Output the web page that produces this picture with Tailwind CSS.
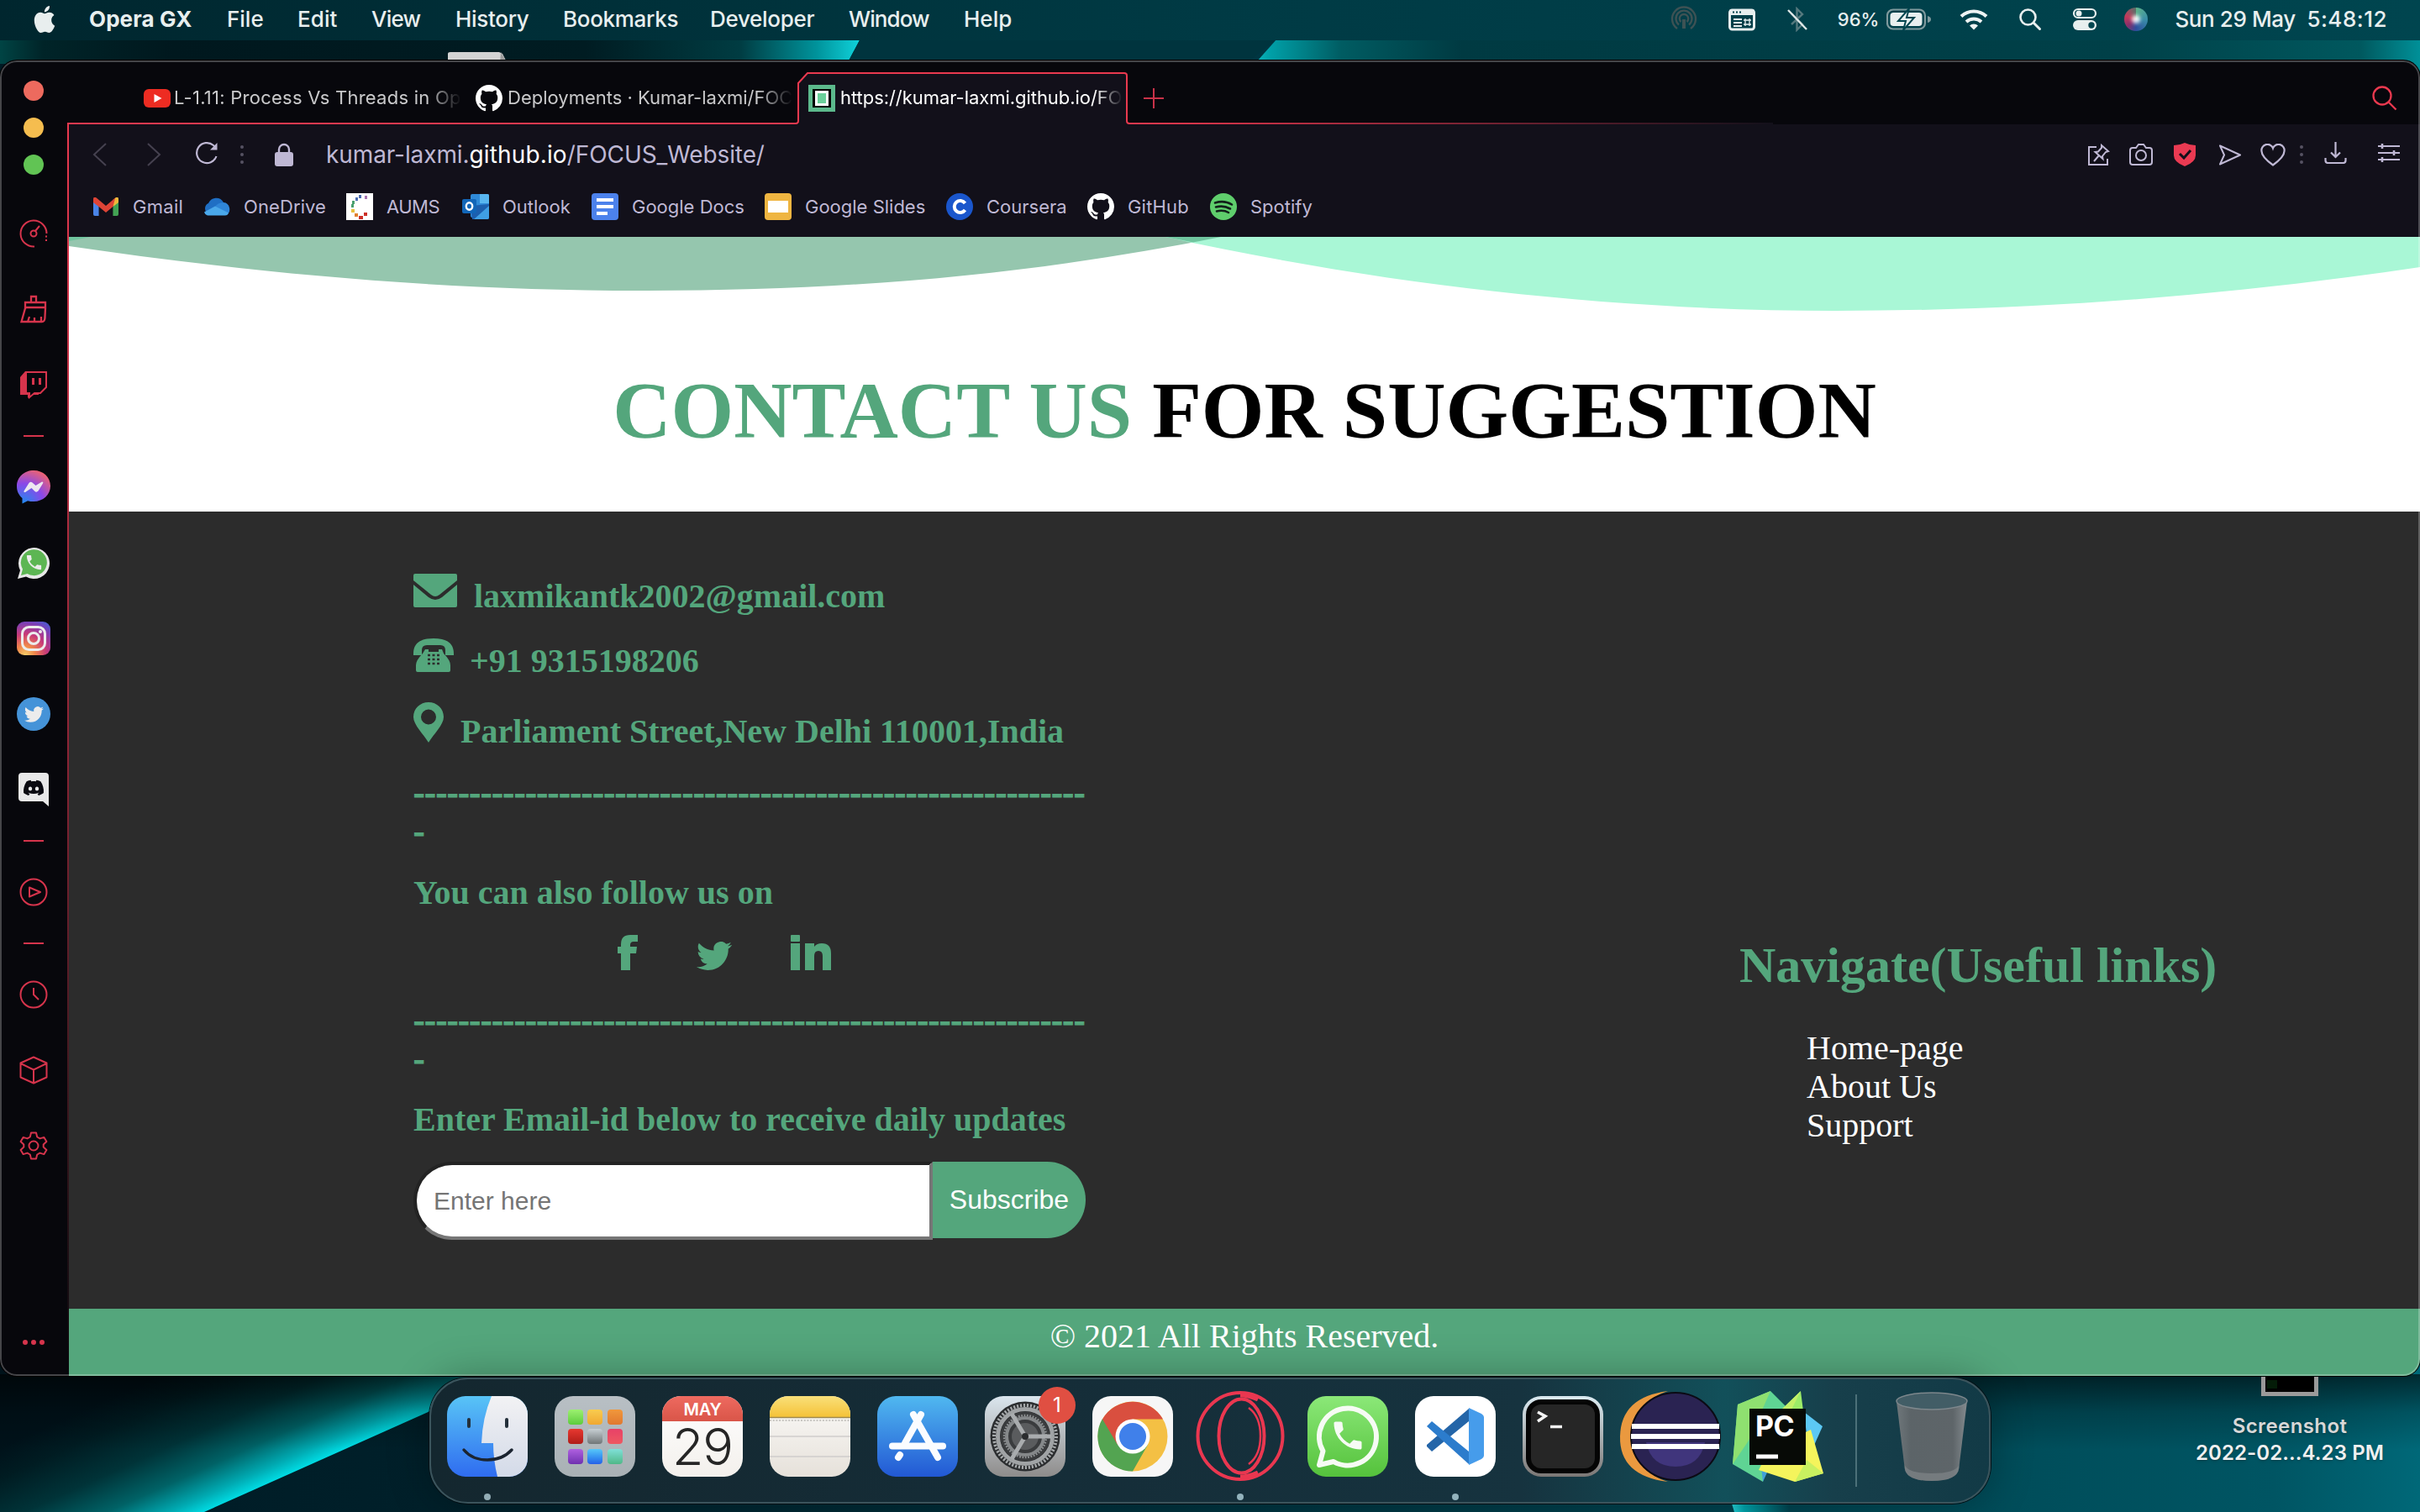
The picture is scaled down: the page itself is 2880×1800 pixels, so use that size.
<!DOCTYPE html>
<html lang="en">
<head>
<meta charset="utf-8">
<title>Desktop</title>
<script src="https://cdn.jsdelivr.net/npm/@tailwindcss/browser@4"></script>
</head>
<body class="relative w-[2880px] h-[1800px] overflow-hidden bg-[#00323c] font-['Inter',sans-serif]">

<!-- shared glyphs -->
<svg class="absolute w-0 h-0" aria-hidden="true">
  <defs>
    <symbol id="github" viewBox="0 0 16 16"><path d="M8 0C3.58 0 0 3.58 0 8c0 3.54 2.29 6.53 5.47 7.59.4.07.55-.17.55-.38 0-.19-.01-.82-.01-1.49-2.01.37-2.53-.49-2.69-.94-.09-.23-.48-.94-.82-1.13-.28-.15-.68-.52-.01-.53.63-.01 1.08.58 1.23.82.72 1.21 1.87.87 2.33.66.07-.52.28-.87.51-1.07-1.78-.2-3.64-.89-3.64-3.95 0-.87.31-1.59.82-2.15-.08-.2-.36-1.02.08-2.12 0 0 .67-.21 2.2.82.64-.18 1.32-.27 2-.27s1.36.09 2 .27c1.53-1.04 2.2-.82 2.2-.82.44 1.1.16 1.92.08 2.12.51.56.82 1.27.82 2.15 0 3.07-1.87 3.75-3.65 3.95.29.25.54.73.54 1.48 0 1.07-.01 1.93-.01 2.2 0 .21.15.46.55.38A8.01 8.01 0 0 0 16 8c0-4.42-3.58-8-8-8z"/></symbol>
    <symbol id="bird" viewBox="0 0 24 24"><path d="M23.953 4.57a10 10 0 01-2.825.775 4.958 4.958 0 002.163-2.723c-.951.555-2.005.959-3.127 1.184a4.92 4.92 0 00-8.384 4.482C7.69 8.095 4.067 6.13 1.64 3.162a4.822 4.822 0 00-.666 2.475c0 1.71.87 3.213 2.188 4.096a4.904 4.904 0 01-2.228-.616v.06a4.923 4.923 0 003.946 4.827 4.996 4.996 0 01-2.212.085 4.936 4.936 0 004.604 3.417 9.867 9.867 0 01-6.102 2.105c-.39 0-.779-.023-1.17-.067a13.995 13.995 0 007.557 2.209c9.053 0 13.998-7.496 13.998-13.985 0-.21 0-.42-.015-.63A9.935 9.935 0 0024 4.59z"/></symbol>
    <symbol id="handset" viewBox="0 0 24 24"><path d="M6.62 10.79c1.44 2.83 3.76 5.14 6.59 6.59l2.2-2.2c.27-.27.67-.36 1.02-.24 1.12.37 2.33.57 3.57.57.55 0 1 .45 1 1V20c0 .55-.45 1-1 1-9.39 0-17-7.61-17-17 0-.55.45-1 1-1h3.5c.55 0 1 .45 1 1 0 1.25.2 2.45.57 3.57.11.35.03.74-.25 1.02l-2.2 2.2z"/></symbol>
    <linearGradient id="beam" gradientUnits="userSpaceOnUse" x1="376" y1="1740" x2="306" y2="1585">
      <stop offset="0" stop-color="#00dbe3"/><stop offset=".1" stop-color="#00aab2"/><stop offset=".28" stop-color="#006266"/><stop offset=".52" stop-color="#003338"/><stop offset=".8" stop-color="#001c22"/><stop offset="1" stop-color="#00121a"/>
    </linearGradient>
    <linearGradient id="base"><stop offset="0" stop-color="#001a24"/><stop offset=".18" stop-color="#00202a"/><stop offset=".5" stop-color="#003440"/><stop offset=".83" stop-color="#004d5a"/><stop offset=".94" stop-color="#005563"/><stop offset="1" stop-color="#006878"/></linearGradient>
    <linearGradient id="topA"><stop offset="0" stop-color="#004444"/><stop offset=".05" stop-color="#002428"/><stop offset=".2" stop-color="#00181e"/><stop offset=".68" stop-color="#001c22"/><stop offset=".86" stop-color="#003c42"/><stop offset=".95" stop-color="#00949c"/><stop offset="1" stop-color="#10d4dc"/></linearGradient>
    <linearGradient id="topB"><stop offset="0" stop-color="#2ce0ea"/><stop offset=".04" stop-color="#00a0a8"/><stop offset=".1" stop-color="#005c62"/><stop offset=".2" stop-color="#003a42"/><stop offset=".75" stop-color="#004048"/><stop offset=".95" stop-color="#00585e"/><stop offset="1" stop-color="#009098"/></linearGradient>
    <linearGradient id="beam2"><stop offset="0" stop-color="#30e4ea"/><stop offset=".25" stop-color="#00a8b0"/><stop offset="1" stop-color="#004450"/></linearGradient>
    <linearGradient id="shade" x2="0" y2="1"><stop offset="0" stop-color="#000" stop-opacity=".6"/><stop offset=".5" stop-color="#000" stop-opacity=".2"/><stop offset="1" stop-color="#000" stop-opacity="0"/></linearGradient>
  </defs>
</svg>

<!-- wallpaper -->
<svg class="absolute inset-0" width="2880" height="1800" viewBox="0 0 2880 1800">
  <rect width="2880" height="1800" fill="url(#base)"/>
  <path d="M0 1560H780L243 1800H0z" fill="url(#beam)"/>
  <path d="M2058 1780L2064 1800H2130V1780z" fill="url(#beam2)"/>
  <rect y="1636" width="2880" height="90" fill="url(#shade)"/>
  <path d="M0 46H1024L1008 76H0z" fill="url(#topA)"/>
  <path d="M1024 46H1520L1482 76H1008z" fill="#00343e"/>
  <path d="M1520 46H2880V120H1454z" fill="url(#topB)"/>
  <path d="M533 64q0-2 3-2h58l4 2 6 12h-71z" fill="#d4d4d4"/><path d="M596 62l8 14h-9z" fill="#9c9c9c"/>
</svg>

<!-- menu bar -->
<header class="relative flex items-center h-12 pb-0.5 bg-linear-to-r from-[#00262e] via-[#003a44] to-[#00454f] text-[#e8efef] text-[26px] leading-8 font-medium whitespace-nowrap tracking-[-0.3px]">
  <svg class="ml-[38px]" width="30" height="32" viewBox="0 0 24 24" preserveAspectRatio="none" fill="#e8eeee"><path d="M12.152 6.896c-.948 0-2.415-1.078-3.96-1.04-2.04.027-3.91 1.183-4.961 3.014-2.117 3.675-.546 9.103 1.519 12.09 1.013 1.454 2.208 3.09 3.792 3.039 1.52-.065 2.09-.987 3.935-.987 1.831 0 2.35.987 3.96.948 1.637-.026 2.676-1.48 3.676-2.948 1.156-1.688 1.636-3.325 1.662-3.415-.039-.013-3.182-1.221-3.22-4.857-.026-3.04 2.48-4.494 2.597-4.559-1.429-2.09-3.623-2.324-4.39-2.376-2-.156-3.675 1.09-4.61 1.09zM15.53 3.83c.843-1.012 1.4-2.427 1.245-3.83-1.207.052-2.662.805-3.532 1.818-.78.896-1.454 2.338-1.273 3.714 1.338.104 2.715-.688 3.559-1.701"/></svg>
  <nav class="flex ml-[38px]">
    <span class="w-[164px] font-bold tracking-[0.1px]">Opera GX</span>
    <span class="w-[84px] tracking-normal">File</span>
    <span class="w-[88px] tracking-[0.1px]">Edit</span>
    <span class="w-[100px] tracking-[-0.8px]">View</span>
    <span class="w-[128px]">History</span>
    <span class="w-[175px]">Bookmarks</span>
    <span class="w-[165px]">Developer</span>
    <span class="w-[137px] tracking-[-0.9px]">Window</span>
    <span class="tracking-normal">Help</span>
  </nav>
  <div class="flex items-center ml-auto pr-[39px]">
    <svg class="mr-[37px]" width="32" height="32" viewBox="0 0 32 32" fill="none" stroke="#3d5254" stroke-width="2.4"><path d="M8 27a14 14 0 1 1 16 0M10 22.500a9.500 9.500 0 1 1 12 0M12.500 19a5.200 5.200 0 1 1 7 0"/><path d="M16 16v11" stroke-width="4"/></svg>
    <svg width="32" height="28" viewBox="0 0 32 28"><rect x="1.500" y="3" width="29" height="23" rx="3" fill="none" stroke="#e8efef" stroke-width="3"/><path d="M1 4q0-2 3-2h24q3 0 3 2v5H1z" fill="#e8efef"/><path d="M5 5.500h2M9 5.500h2M13 5.500h2" stroke="#00434d" stroke-width="2"/><path d="M6 14h10M6 18h10M6 22h10" stroke="#e8efef" stroke-width="2"/><path d="M20 15h5v5h-5zM20 13v9M25 13v9M18 15h9M18 20h9" stroke="#e8efef" fill="none" stroke-width="1.300"/></svg>
    <svg class="ml-[37px]" width="26" height="30" viewBox="0 0 26 30" fill="none"><path d="M6 8l13 13-6.500 6.500V2.500L19 9 6 21" stroke="#55797e" stroke-width="2.400"/><path d="M2 4l22 23" stroke="#dfe8e8" stroke-width="2.400"/></svg>
    <span class="ml-[35px] text-[22px] tracking-normal">96%</span>
    <svg class="ml-[9px]" width="54" height="26" viewBox="0 0 54 26"><rect x="1" y="1.500" width="45" height="23" rx="7" fill="none" stroke="#7f9a9e" stroke-width="2.200"/><path d="M49 9q4 1 4 4t-4 4z" fill="#7f9a9e"/><rect x="4.500" y="5" width="38" height="16" rx="4" fill="#e8efef"/><path d="M27 0L14 15h9l-3 11 13-15h-9z" fill="#e8efef" stroke="#00444e" stroke-width="2"/></svg>
    <svg class="ml-[33px]" width="34" height="26" viewBox="0 0 34 26" fill="none" stroke="#eef3f3"><path d="M2 9.500a21.500 21.500 0 0 1 30 0" stroke-width="4"/><path d="M8 16a13.500 13.500 0 0 1 18 0" stroke-width="4"/><path d="M12 20.500a7.500 7.500 0 0 1 10 0L17 25.500z" fill="#eef3f3" stroke="none"/></svg>
    <svg class="ml-[36px]" width="28" height="28" viewBox="0 0 28 28" fill="none" stroke="#e8efef" stroke-width="2.600" stroke-linecap="round"><circle cx="11.500" cy="11.500" r="9"/><path d="M18.500 18.500l7 7" stroke-width="3"/></svg>
    <svg class="ml-[36px]" width="30" height="28" viewBox="0 0 30 28"><rect x="2" y="2" width="26" height="10" rx="5" fill="none" stroke="#e8efef" stroke-width="2.200"/><circle cx="8" cy="7" r="3.500" fill="#e8efef"/><rect x="1" y="15" width="28" height="12" rx="6" fill="#e8efef"/><circle cx="23" cy="21" r="3.700" fill="#00444e"/></svg>
    <span class="ml-[32px] relative size-[28px] rounded-full bg-[conic-gradient(#5fb38a,#3a8fa8_25%,#2d4e9e_50%,#8a2f6a_65%,#c23b5a_80%,#5a6f6a)] flex items-center justify-center"><span class="size-[10px] rounded-full bg-white/90 blur-[2px]"></span></span>
    <span class="ml-[32px] tracking-[-0.4px] w-[157px]">Sun 29 May</span>
    <span class="tracking-[0.5px]">5:48:12</span>
  </div>
</header>

<!-- browser window -->
<main class="absolute left-0 top-[72px] w-[2880px] h-[1566px] rounded-[20px] overflow-hidden flex bg-[#07070c] shadow-[0_0_0_1px_#000]">
  <!-- side panel -->
  <aside class="w-20 shrink-0 flex flex-col items-center pt-6 text-[#d6344c]">
    <div class="flex flex-col gap-5">
      <span class="size-6 rounded-full bg-[#ed6a5e]"></span>
      <span class="size-6 rounded-full bg-[#f5bd4f]"></span>
      <span class="size-6 rounded-full bg-[#61c454]"></span>
    </div>
    <div class="mt-[25px] h-[90px] flex items-center"><svg width="34" height="34" viewBox="0 0 34 34" fill="none" stroke="currentColor" stroke-width="2"><path d="M18 32.500A15.500 15.500 0 1 1 32.500 17"/><circle cx="17" cy="17" r="3.500"/><path d="M19 14l5-6M32 19.500v2M32 24v2"/></svg></div>
    <div class="h-[90px] flex items-center"><svg width="34" height="34" viewBox="0 0 34 34" fill="none" stroke="currentColor" stroke-width="2.300"><path d="M14 9V2h6v7M7 17V9h24v8M7 15h24M7 16L2.500 32H27q3 0 3.400-4L31 16M10 32l2-6M18 32v-5M26 31v-5"/></svg></div>
    <div class="h-[90px] flex items-center"><svg width="34" height="34" viewBox="0 0 34 34" fill="none"><path d="M7 1L1 8v21h9v4l5-4h8V1z" fill="currentColor"/><path d="M8 2h24v18l-7 7h-7l-6 5v-5H8z" fill="#07070c" stroke="currentColor" stroke-width="2"/><rect x="15" y="9" width="3" height="8" fill="currentColor"/><rect x="23" y="9" width="3" height="8" fill="currentColor"/></svg></div>
    <div class="h-8 flex items-center"><span class="w-6 h-0.5 bg-current"></span></div>
    <div class="h-[90px] flex items-center"><svg width="40" height="40" viewBox="0 0 40 40"><defs><radialGradient id="msg" cx=".2" cy="1" r="1.100"><stop offset="0" stop-color="#1f8cf0"/><stop offset=".55" stop-color="#8a48e8"/><stop offset="1" stop-color="#f0646e"/></radialGradient></defs><path d="M20 0C8.700 0 0 8.200 0 19c0 6 2.500 10.500 6.500 14v6.500l6.500-3.300q3.200.9 7 .9c11.300 0 20-8 20-18.500S31.300 0 20 0z" fill="url(#msg)"/><path d="M8.500 24.500l6-9.500q2-2 4-.5l4 3.500 7.500-4.500q2 0 1 2l-5.500 9q-2 2-4 .5L17.500 21l-7.500 5q-2 .5-1.500-1.500z" fill="#ece8f0"/></svg></div>
    <div class="h-[90px] flex items-center"><svg width="40" height="40" viewBox="0 0 40 40"><path d="M1 39l3-10A18.500 18.500 0 1 1 11 36.500z" fill="#e8e8e8"/><path d="M5 35l2-7.500A15.500 15.500 0 1 1 12.500 33z" fill="#5db653"/><use href="#handset" x="9" y="8" width="23" height="23" fill="#ececec"/></svg></div>
    <div class="h-[90px] flex items-center"><svg width="40" height="40" viewBox="0 0 40 40"><defs><radialGradient id="ig" cx=".25" cy="1" r="1.150"><stop offset="0" stop-color="#f5cf6a"/><stop offset=".25" stop-color="#f0874a"/><stop offset=".55" stop-color="#c83a78"/><stop offset=".85" stop-color="#7a40b8"/><stop offset="1" stop-color="#4e5ad0"/></radialGradient></defs><rect width="40" height="40" rx="9" fill="url(#ig)"/><g fill="none" stroke="#ececec" stroke-width="3"><rect x="6.500" y="6.500" width="27" height="27" rx="8"/><circle cx="20" cy="20" r="6.500"/></g><circle cx="28" cy="12" r="2" fill="#ececec"/></svg></div>
    <div class="h-[90px] flex items-center"><svg width="40" height="40" viewBox="0 0 40 40"><circle cx="20" cy="20" r="20" fill="#4593d8"/><use href="#bird" x="9" y="9" width="23" height="23" fill="#ececec"/></svg></div>
    <div class="h-[90px] flex items-center"><svg width="40" height="40" viewBox="0 0 40 40"><path d="M6 0h28q4 0 4 4v36l-7-6H6q-4 0-4-4V4q0-4 4-4z" fill="#e8e8e8"/><path transform="translate(8 6) scale(1)" d="M20.317 4.370a19.800 19.800 0 00-4.885-1.515c-.2.300-.5.900-.7 1.290-1.840-.28-3.680-.28-5.490 0-.16-.4-.45-.95-.7-1.290a19.700 19.700 0 00-4.885 1.515C.533 9.046-.319 13.580.1 18.058c2.050 1.510 4.040 2.420 5.990 3.030.5-.65.95-1.350 1.310-2.020-.65-.25-1.300-.55-1.910-1.020l.45-.3c3.930 1.800 8.180 1.800 12.100 0l.45.3c-.6.450-1.250.770-1.910 1.020.36.700.8 1.370 1.310 2.020 1.960-.6 3.950-1.520 6-3.030.5-5.180-.84-9.670-3.580-13.688zM8.020 15.330c-1.180 0-2.160-1.090-2.160-2.420s.96-2.420 2.160-2.420 2.180 1.100 2.160 2.420c0 1.330-.96 2.420-2.160 2.420zm7.970 0c-1.180 0-2.160-1.090-2.160-2.420s.96-2.420 2.160-2.420 2.180 1.100 2.160 2.420c0 1.330-.95 2.420-2.160 2.420z" fill="#0a0a10"/></svg></div>
    <div class="h-8 flex items-center"><span class="w-6 h-0.5 bg-current"></span></div>
    <div class="h-[90px] flex items-center"><svg width="34" height="34" viewBox="0 0 34 34" fill="none" stroke="currentColor" stroke-width="2" stroke-linejoin="round"><circle cx="17" cy="17" r="15.500"/><path d="M12 11.500l13 5.500-13 5.500z"/></svg></div>
    <div class="h-8 flex items-center"><span class="w-6 h-0.5 bg-current"></span></div>
    <div class="h-[90px] flex items-center"><svg width="34" height="34" viewBox="0 0 34 34" fill="none" stroke="currentColor" stroke-width="2"><circle cx="17" cy="17" r="15.500"/><path d="M17 9v8l6 6"/></svg></div>
    <div class="h-[90px] flex items-center"><svg width="34" height="34" viewBox="0 0 34 34" fill="none" stroke="currentColor" stroke-width="2" stroke-linejoin="round"><path d="M17 1.500l15.500 7v17L17 32.500l-15.500-7v-17zM1.500 9L17 16.500 32.500 9M17 16.500v16"/></svg></div>
    <div class="h-[90px] flex items-center"><svg width="34" height="34" viewBox="0 0 34 34" fill="none" stroke="currentColor" stroke-width="2" stroke-linejoin="round"><circle cx="17" cy="17" r="5.500"/><path d="M14 1.500h6l1.200 5 3.300 1.900 4.900-1.500 3 5.200-3.700 3.500v2.800l3.700 3.500-3 5.200-4.900-1.500-3.300 1.900-1.200 5h-6l-1.200-5-3.300-1.900-4.900 1.500-3-5.200 3.700-3.500v-2.800l-3.700-3.500 3-5.200 4.900 1.500 3.300-1.900z"/></svg></div>
    <div class="mt-auto mb-[37px] flex gap-1"><span class="size-1.5 rounded-full bg-current"></span><span class="size-1.5 rounded-full bg-current"></span><span class="size-1.5 rounded-full bg-current"></span></div>
  </aside>

  <section class="flex-1 flex flex-col">
    <!-- tab strip -->
    <div class="relative h-[76px] shrink-0 flex">
      <svg class="absolute inset-0" width="2800" height="76" viewBox="80 72 2800 76" fill="none">
        <defs><linearGradient id="tabline" gradientUnits="userSpaceOnUse" x1="1342" y1="0" x2="2110" y2="0"><stop offset="0" stop-color="#ea394f"/><stop offset=".25" stop-color="#b82e42"/><stop offset="1" stop-color="#12101a"/></linearGradient></defs>
        <path d="M951 148V98l11-11h380v61z" fill="#12101a"/>
        <path d="M80 147h867q3 0 3-3V99l11-12h377q3 0 3 3v54q0 3 3 3" stroke="#ea394f" stroke-width="2"/>
        <path d="M1344 146H2110v2H1344z" fill="url(#tabline)"/>
      </svg>
      <div class="relative w-full h-[74px] pt-[15px] flex items-center text-[22px] whitespace-nowrap text-[#c9c9cb]">
        <div class="w-[395px] ml-[91px] flex items-center">
          <svg width="32" height="22" viewBox="0 0 32 22"><rect width="32" height="22" rx="6" fill="#ed2c22"/><path d="M12.500 6v10l9-5z" fill="#fff"/></svg>
          <span class="ml-1 tracking-[0.25px] [mask-image:linear-gradient(90deg,#000_88%,transparent)]">L-1.11: Process Vs Threads in Op</span>
        </div>
        <div class="w-[396px] flex items-center">
          <svg width="32" height="32" fill="#fff"><use href="#github" width="32" height="32"/></svg>
          <span class="ml-1.5 [mask-image:linear-gradient(90deg,#000_88%,transparent)]">Deployments · Kumar-laxmi/FOC</span>
        </div>
        <div class="w-[393px] flex items-center text-white">
          <span class="size-8 bg-black border-[5px] border-[#5cb98c] flex items-center justify-center"><span class="w-[16px] h-[18px] border-[3px] border-white bg-[#6ad09a]"></span></span>
          <span class="ml-1.5 tracking-[-0.05px] [mask-image:linear-gradient(90deg,#000_90%,transparent)]">https://kumar-laxmi.github.io/FO</span>
        </div>
        <svg class="ml-[5px]" width="26" height="26" viewBox="0 0 26 26" stroke="#c93249" stroke-width="2"><path d="M13 1v24M1 13h24"/></svg>
        <svg class="ml-auto mr-[27px]" width="30" height="30" viewBox="0 0 30 30" fill="none" stroke="#ea394f" stroke-width="2.300"><circle cx="12" cy="12" r="10.500"/><path d="M19.500 19.500l9 9"/></svg>
      </div>
    </div>

    <div class="flex-1 flex">
      <div class="w-0.5 bg-linear-to-b from-[#ea394f] via-[#8c2436] to-[#07070c]"></div>
      <div class="flex-1 flex flex-col">
        <!-- address bar -->
        <div class="h-[72px] bg-[#12101a] flex items-center text-[#bfb8d4]">
          <svg class="ml-[28px]" width="18" height="28" viewBox="0 0 18 28" fill="none" stroke="#45414f" stroke-width="2"><path d="M16 1L2 14l14 13"/></svg>
          <svg class="ml-[46px]" width="18" height="28" viewBox="0 0 18 28" fill="none" stroke="#45414f" stroke-width="2"><path d="M2 1l14 13L2 27"/></svg>
          <svg class="ml-[40px] -mt-1" width="28" height="28" viewBox="0 0 28 28" fill="none" stroke="currentColor" stroke-width="2.200"><path d="M25.500 18A12 12 0 1 1 22 5l3 3"/><path d="M26.500 2v8.500H18z" fill="currentColor" stroke="none"/></svg>
          <svg class="ml-[26px]" width="4" height="24" viewBox="0 0 4 24" fill="#565262"><circle cx="2" cy="3" r="2"/><circle cx="2" cy="12" r="2"/><circle cx="2" cy="21" r="2"/></svg>
          <svg class="ml-[36px]" width="24" height="28" viewBox="0 0 24 28"><rect x="1" y="11" width="22" height="17" rx="3" fill="currentColor"/><path d="M6 12V8a6 6 0 0 1 12 0v4" fill="none" stroke="currentColor" stroke-width="2.400"/></svg>
          <p class="ml-[38px] text-[28px] leading-9 whitespace-nowrap tracking-[-0.1px]">kumar-laxmi.<span class="text-white tracking-[0.15px]">github.io</span>/FOCUS_Website/</p>
          <svg class="ml-auto" width="27" height="27" viewBox="0 0 27 27" fill="none" stroke="currentColor" stroke-width="2"><path d="M11 4H2v21h22v-7"/><path d="M17 2l8 7-3 1-4 5 .5 3-9-8 3.500-.5 4-4.500zM14 14l-6 7"/></svg>
          <svg class="ml-[23px]" width="28" height="26" viewBox="0 0 28 26" fill="none" stroke="currentColor" stroke-width="2"><path d="M4 5h4l3-4h6l3 4h4q3 0 3 3v14q0 3-3 3H4q-3 0-3-3V8q0-3 3-3z"/><circle cx="14" cy="14" r="6"/></svg>
          <svg class="ml-[25px]" width="26" height="28" viewBox="0 0 26 28"><path d="M13 0q6 3 13 3v12q0 8-13 13Q0 23 0 15V3q7 0 13-3z" fill="#ea3a52"/><path d="M7 13l5 5 8-9" fill="none" stroke="#12101a" stroke-width="3"/></svg>
          <svg class="ml-[27px]" width="27" height="25" viewBox="0 0 27 25" fill="none" stroke="currentColor" stroke-width="2" stroke-linejoin="round"><path d="M2 1.500l24 11-24 11 5-11z"/></svg>
          <svg class="ml-[23px]" width="30" height="27" viewBox="0 0 30 27" fill="none" stroke="currentColor" stroke-width="2.200"><path d="M15 25.500C6 19 1.500 14 1.500 9A7 7 0 0 1 15 5.500 7 7 0 0 1 28.500 9c0 5-4.500 10-13.500 16.500z"/></svg>
          <svg class="ml-[17px]" width="4" height="24" viewBox="0 0 4 24" fill="#565262"><circle cx="2" cy="3" r="2"/><circle cx="2" cy="12" r="2"/><circle cx="2" cy="21" r="2"/></svg>
          <svg class="ml-[25px] -mt-1" width="27" height="26" viewBox="0 0 27 26" fill="none" stroke="currentColor" stroke-width="2.200"><path d="M13.500 0v17M8 12.500l5.500 5.500 5.500-5.500M1.500 19v3q0 3 3 3h18q3 0 3-3v-3"/></svg>
          <svg class="ml-[37px] mr-[24px] -mt-1" width="26" height="24" viewBox="0 0 26 24" fill="none" stroke="currentColor"><path d="M0 4h26M0 12h26M0 20h26" stroke-width="2.200"/><path d="M5 1v6M19 9v6M5 17v6" stroke-width="2.600"/></svg>
        </div>
        <!-- bookmarks bar -->
        <div class="h-[62px] pb-2.5 bg-[#12101a] flex items-center text-[22px] leading-8 text-[#bfb8d4] whitespace-nowrap">
          <div class="w-[132px] ml-7 flex items-center"><svg class="mx-px" width="30" height="22" viewBox="0 0 32 22" preserveAspectRatio="none"><path d="M0 2v18q0 2 2 2h5V9z" fill="#4a84e8"/><path d="M32 2v18q0 2-2 2h-5V9z" fill="#43a354"/><path d="M32 2.500q0-4.500-4-2L25 3v8l7-5z" fill="#f0b93a"/><path d="M0 2.500Q0-2 4 .500L16 10 28 .500 25 11l-9 7-9-7-7-5z" fill="#de4436"/></svg><span class="ml-4 tracking-[0.3px]">Gmail</span></div>
          <div class="w-[170px] flex items-center"><svg width="32" height="22" viewBox="0 0 32 22"><path d="M7 20a7 7 0 0 1-1-13A10 10 0 0 1 24 6l-9 12z" fill="#1f6fc4"/><path d="M24 6a8 8 0 0 1 3 15l-14-9q4-6 11-6z" fill="#2f86d8"/><path d="M5 21.500q-3-1-4-4l13-7 16 8q-1 3-4 3z" fill="#4aa8ea"/></svg><span class="ml-4 tracking-[0.1px]">OneDrive</span></div>
          <div class="w-[138px] flex items-center"><svg width="32" height="32" viewBox="0 0 32 32" fill="none" stroke-width="4"><rect width="32" height="32" fill="#fff"/><path d="M22 5h3" stroke="#a874b0"/><path d="M15 4h3M11 7h3" stroke="#4a6ab0"/><path d="M7 11h3M6 15h3" stroke="#4aa070"/><path d="M6 21h4" stroke="#e8c040"/><path d="M10 26h4" stroke="#e08030"/><path d="M15 29h5M21 25h4" stroke="#cc3028"/></svg><span class="ml-4 tracking-[-0.5px]">AUMS</span></div>
          <div class="w-[154px] flex items-center"><svg width="34" height="30" viewBox="0 0 34 30"><rect x="10" width="22" height="28" rx="2" fill="#2f8ad8"/><path d="M21 0h9q2 0 2 2v9H21z" fill="#58b6f0"/><path d="M10 14l22-2v16q0 2-2 2H12z" fill="#1c5fae"/><path d="M32 14v14q0 2-2 2H14z" fill="#3f9fe4"/><rect y="6" width="17" height="17" rx="2" fill="#1266b8"/><ellipse cx="8.500" cy="14.500" rx="3.700" ry="4.200" fill="none" stroke="#fff" stroke-width="2.400"/></svg><span class="ml-3.5">Outlook</span></div>
          <div class="w-[206px] flex items-center"><svg width="32" height="32" viewBox="0 0 32 32"><rect width="32" height="32" rx="4" fill="#4c82ec"/><path d="M6 8h20M6 16h20M6 24h13" stroke="#fff" stroke-width="4"/></svg><span class="ml-4">Google Docs</span></div>
          <div class="w-[216px] flex items-center"><svg width="32" height="32" viewBox="0 0 32 32"><rect width="32" height="32" rx="4" fill="#efb541"/><rect x="4" y="9" width="24" height="14" fill="#fff"/></svg><span class="ml-4">Google Slides</span></div>
          <div class="w-[168px] flex items-center"><svg width="32" height="32" viewBox="0 0 32 32"><circle cx="16" cy="16" r="16" fill="#1a56cc"/><path d="M22.500 12a7 7 0 1 0 0 8" fill="none" stroke="#fff" stroke-width="4"/></svg><span class="ml-4">Coursera</span></div>
          <div class="w-[146px] flex items-center"><svg width="32" height="32" fill="#fff"><use href="#github" width="32" height="32"/></svg><span class="ml-4 tracking-[0.2px]">GitHub</span></div>
          <div class="flex items-center"><svg width="32" height="32" viewBox="0 0 32 32"><circle cx="16" cy="16" r="16" fill="#5fce6c"/><path d="M6 11.500q11-3.500 20 2M7 16.500q9-2.500 17 2M8 21.500q8-2 14 1.500" fill="none" stroke="#12201a" stroke-width="2.600" stroke-linecap="round"/></svg><span class="ml-4">Spotify</span></div>
        </div>

        <!-- web page -->
        <div class="h-[327px] bg-white font-['Liberation_Serif',serif]">
          <svg class="block" width="2798" height="100" viewBox="0 0 2798 100">
            <path d="M0 0V11C200 40 420 64 687 64C960 64 1170 40 1371 0z" fill="#95c6ae"/>
            <path d="M1305 0C1560 56 1830 88 2102 88C2340 88 2570 70 2798 36V0z" fill="#a9f7d6"/>
            <path d="M1305 0L1338 6.500L1371 0zM0 0H26L0 5z" fill="#70c59f"/>
          </svg>
          <h1 class="mt-[52px] text-center text-[96px] leading-[110px] font-bold text-black"><span class="text-[#54a67c]">CONTACT US</span> FOR SUGGESTION</h1>
        </div>
        <div class="h-[949px] bg-[#2c2c2c] flex font-['Liberation_Serif',serif] text-[40px] leading-[46px]">
          <div class="ml-[410px] mt-[74px] w-[801px] font-bold text-[#54a67c]">
            <div class="h-[77px] flex items-start">
              <svg width="52" height="40" viewBox="0 0 52 40" fill="#54a67c"><path d="M2 0h48q2 0 2 2v6L31 25q-5 4-10 0L0 8V2q0-2 2-2z"/><path d="M0 13l18 15q8 6 16 0l18-15v25q0 2-2 2H2q-2 0-2-2z"/></svg>
              <span class="ml-5 mt-1">laxmikantk2002@gmail.com</span>
            </div>
            <div class="h-[76px] flex items-start">
              <svg width="48" height="40" viewBox="0 0 48 40" fill="#54a67c"><path d="M0 18C0 6 8 0 24 0s24 6 24 18v2H38v-6q0-6-6-6H16q-6 0-6 6v6H0z"/><path d="M14 13h4v3h12v-3h4l2 5q8 8 8 14v6q0 2-2 2H5q-2 0-2-2v-6q0-6 8-14z"/><path d="M17 20h3M22.500 20h3M28 20h3M17 25h3M22.500 25h3M28 25h3M17 30h3M22.500 30h3M28 30h3" stroke="#2c2c2c" stroke-width="2.600"/></svg>
              <span class="ml-[19px] mt-1">+91 9315198206</span>
            </div>
            <div class="h-[85px] flex items-start">
              <svg width="36" height="48" viewBox="0 0 36 48" fill="#54a67c" fill-rule="evenodd"><path d="M18 0C8 0 0 7.500 0 17.500 0 27 12 38 18 48c6-10 18-21 18-30.500C36 7.500 28 0 18 0zm0 8.500a9 9 0 1 1 0 18 9 9 0 0 1 0-18z"/></svg>
              <span class="ml-5 mt-3 whitespace-nowrap">Parliament Street,New Delhi 110001,India</span>
            </div>
            <p class="break-all [-webkit-text-stroke:1px_#54a67c]">-------------------------------------------------------------</p>
            <p class="mt-[27px]">You can also follow us on</p>
            <div class="mt-[27px] pl-[243px] h-[42px] flex items-end">
              <svg width="24" height="42" viewBox="0 0 24 42" fill="#54a67c"><path d="M4 42V22H0v-8h4V11Q4 0 15 0h9v8h-5q-4 0-4 4v2h8l-1 8h-7v20z"/></svg>
              <svg class="ml-[70px]" width="42" height="34" viewBox="0 2.200 24 19.600" preserveAspectRatio="none" fill="#54a67c"><use href="#bird" width="24" height="24"/></svg>
              <svg class="ml-[70px]" width="48" height="42" viewBox="0 0 48 42" fill="#54a67c"><rect width="11" height="8" rx="1"/><rect y="10" width="11" height="32"/><path d="M17 42V10h11v4q3-4 9-4 11 0 11 12v20H38V25q0-6-5-6t-5 6v17z"/></svg>
            </div>
            <p class="mt-[37px] break-all [-webkit-text-stroke:1px_#54a67c]">-------------------------------------------------------------</p>
            <p class="mt-[26px]">Enter Email-id below to receive daily updates</p>
            <form class="mt-[27px] flex items-start font-['Liberation_Sans',sans-serif] font-normal">
              <div class="w-[618px] h-[93px] rounded-l-[46px] border-4 border-t-[#232323] border-l-[#232323] border-b-[#767676] border-r-[#767676] bg-white text-[#757575] text-[30px] leading-[85px] pl-5">Enter here</div>
              <div class="w-[182px] h-[91px] rounded-r-[46px] bg-[#54a67c] text-white text-[32px] leading-[91px] text-center">Subscribe</div>
            </form>
          </div>
          <div class="ml-[777px] mt-[506px]">
            <h2 class="text-[60px] leading-[69px] font-bold text-[#54a67c] whitespace-nowrap">Navigate(Useful links)</h2>
            <ul class="mt-[41px] pl-20 text-white"><li>Home-page</li><li>About Us</li><li>Support</li></ul>
          </div>
        </div>
        <footer class="h-20 bg-[#54a67c] pt-2.5 text-center text-white font-['Liberation_Serif',serif] text-[40px] leading-[46px]">© 2021 All Rights Reserved.</footer>
      </div>
    </div>
  </section>
  <div class="absolute inset-0 rounded-[20px] border-2 border-white/25"></div>
</main>

<!-- desktop file -->
<div class="absolute left-[2600px] top-[1639px] w-[250px] flex flex-col items-center text-[24px] leading-8 font-semibold text-[#f0f0f0] text-shadow-md">
  <span class="w-[68px] h-[23px] bg-black border-[#9a9a9a] border-x-[5px] border-b-[5px] flex"><span class="mt-1 ml-0.5 w-3 h-2.5 bg-[#041c08]"></span></span>
  <span class="mt-5 text-[#d8d8d8] tracking-[0.4px]">Screenshot</span>
  <span class="tracking-[0.1px]">2022-02...4.23 PM</span>
</div>

<!-- dock -->
<div class="absolute left-[511px] top-[1640px] w-[1858px] h-[150px] rounded-[46px] border-2 border-[#3b545c] bg-[linear-gradient(90deg,#14272f_0%,#152d38_40%,#16333f_70%,#12505a_83%,#173f4b_90%,#123a46_100%)] shadow-[0_0_50px_rgba(0,0,0,.3),0_0_0_1px_#031218] flex pl-[3px]">
  <!-- Finder -->
  <div class="w-32 flex flex-col items-center pt-3"><div class="h-28 flex items-center"><svg class="rounded-[22px]" width="96" height="96" viewBox="0 0 96 96"><defs><linearGradient id="fa" x2="0" y2="1"><stop stop-color="#58c4f6"/><stop offset="1" stop-color="#2f6cf0"/></linearGradient><linearGradient id="fb" x2="0" y2="1"><stop stop-color="#f2f2f4"/><stop offset="1" stop-color="#d3dae8"/></linearGradient></defs><rect width="96" height="96" fill="url(#fa)"/><path d="M53 0Q42 26 41 56h14q0 20 5 40h36V0z" fill="url(#fb)"/><path d="M26 28v8M71 28v8" stroke="#24303a" stroke-width="4" stroke-linecap="round"/><path d="M20 64q10 12 28 12t29-12" fill="none" stroke="#1b2430" stroke-width="3.500" stroke-linecap="round"/></svg></div><span class="mt-3 size-2 rounded-full bg-[#93adb6]"></span></div>
  <!-- Launchpad -->
  <div class="w-32 flex flex-col items-center pt-3"><div class="h-28 flex items-center"><div class="size-24 rounded-[22px] bg-linear-to-b from-[#b8bfc4] to-[#a9b1b5] grid grid-cols-[18px_18px_18px] grid-rows-[18px_18px_18px] gap-[5.500px] content-center justify-center">
    <span class="rounded-[4px] bg-linear-to-b from-[#9cf070] to-[#5ccc3c]"></span><span class="rounded-[4px] bg-linear-to-b from-[#f8cc50] to-[#f0a830]"></span><span class="rounded-[4px] bg-linear-to-b from-[#f0983c] to-[#e07830]"></span>
    <span class="rounded-[4px] bg-linear-to-b from-[#e83830] to-[#b01c18]"></span><span class="rounded-[4px] bg-linear-to-b from-[#c8d0d4] to-[#707678]"></span><span class="rounded-[4px] bg-linear-to-b from-[#e84068] to-[#ee5860]"></span>
    <span class="rounded-[4px] bg-linear-to-b from-[#b060e0] to-[#7030b0]"></span><span class="rounded-[4px] bg-linear-to-b from-[#58c8f8] to-[#2860e8]"></span><span class="rounded-[4px] bg-linear-to-b from-[#80e0d8] to-[#50b888]"></span>
  </div></div></div>
  <!-- Calendar -->
  <div class="w-32 flex flex-col items-center pt-3"><div class="h-28 flex items-center"><div class="size-24 rounded-[22px] overflow-hidden bg-linear-to-b from-white to-[#f3f0ec] flex flex-col items-center"><span class="w-full h-[30px] bg-linear-to-b from-[#ee6a60] to-[#d95548] text-white text-[20px] leading-[32px] font-semibold text-center tracking-[-0.3px]">MAY</span><span class="text-[61px] leading-[60px] font-light text-[#262626] tracking-[-1px]">29</span></div></div></div>
  <!-- Notes -->
  <div class="w-32 flex flex-col items-center pt-3"><div class="h-28 flex items-center"><svg class="rounded-[22px]" width="96" height="96" viewBox="0 0 96 96"><defs><linearGradient id="na" x2="0" y2="1"><stop stop-color="#f9e07a"/><stop offset="1" stop-color="#f5c238"/></linearGradient><linearGradient id="nb" x2="0" y2="1"><stop stop-color="#fbfaf8"/><stop offset="1" stop-color="#e6e1da"/></linearGradient></defs><rect width="96" height="96" fill="url(#nb)"/><rect width="96" height="25" fill="url(#na)"/><path d="M0 25.500h96" stroke="#a08a50" stroke-width="1.500"/><path d="M0 29h96" stroke="#c8c6c2" stroke-width="2" stroke-dasharray="2 1.700"/><path d="M0 48h96M0 72h96" stroke="#cfcdcc" stroke-width="1.500"/></svg></div></div>
  <!-- App Store -->
  <div class="w-32 flex flex-col items-center pt-3"><div class="h-28 flex items-center"><svg class="rounded-[22px]" width="96" height="96" viewBox="0 0 96 96"><defs><linearGradient id="as" x2="0" y2="1"><stop stop-color="#50b8f0"/><stop offset="1" stop-color="#2258d4"/></linearGradient></defs><rect width="96" height="96" fill="url(#as)"/><g stroke="#fafcff" stroke-width="8" stroke-linecap="round"><path d="M52 22L33 56M27 70l-2 3M43 22l29 51"/><path d="M18 59.500h60"/></g></svg></div></div>
  <!-- System Preferences -->
  <div class="w-32 flex flex-col items-center pt-3"><div class="relative h-28 flex items-center"><svg class="rounded-[22px]" width="96" height="96" viewBox="0 0 96 96" fill="none"><defs><linearGradient id="sp" x2="0" y2="1"><stop stop-color="#dbe6ee"/><stop offset="1" stop-color="#8e8c8b"/></linearGradient></defs><rect width="96" height="96" fill="url(#sp)"/><circle cx="48" cy="48" r="41.500" fill="#2b2d2f"/><circle cx="48" cy="48" r="37" stroke="#a6a9ab" stroke-width="4" stroke-dasharray="2.200 1.800"/><circle cx="48" cy="48" r="32.500" stroke="#a0a3a5" stroke-width="5"/><circle cx="48" cy="48" r="29.500" fill="#3a3c3e"/><circle cx="48" cy="48" r="22" stroke="#85888a" stroke-width="4"/><circle cx="48" cy="48" r="25" stroke="#8e9193" stroke-width="2.500" stroke-dasharray="1.800 1.600"/><circle cx="48" cy="48" r="16" fill="#5a5c5e"/><path d="M48 48h31M48 48L32 21M48 48L32 75" stroke="#a9acae" stroke-width="5"/><circle cx="48" cy="48" r="4" fill="#2b2d2f"/></svg><span class="absolute -top-[3px] left-[64px] size-11 rounded-full bg-[#e04f42] text-white text-[24px] leading-[44px] text-center">1</span></div></div>
  <!-- Chrome -->
  <div class="w-32 flex flex-col items-center pt-3"><div class="h-28 flex items-center"><svg class="rounded-[22px]" width="96" height="96" viewBox="0 0 96 96"><rect width="96" height="96" fill="#f6f6f6"/><circle cx="48" cy="48" r="41.500" fill="#f4c044"/><path d="M48 48L66 58 48 89.500A41.500 41.500 0 0 1 12 27z" fill="#53a451"/><path d="M12 27.500A41.500 41.500 0 0 1 84 27.500H48L30 58z" fill="#d94f3f"/><circle cx="48" cy="48" r="20.500" fill="#fff"/><circle cx="48" cy="48" r="16" fill="#4080ea"/></svg></div></div>
  <!-- Opera GX -->
  <div class="w-32 flex flex-col items-center pt-3"><div class="h-28 flex items-center"><svg width="106" height="110" viewBox="0 0 106 110" fill="none" stroke="#ea3750" stroke-width="4"><ellipse cx="53" cy="54.500" rx="50.500" ry="51.500"/><ellipse cx="54.500" cy="54.500" rx="27" ry="44"/><path d="M53 6q10 0 21 5M53 103q10 0 21-5" stroke-width="5"/><path d="M63 21q14 10 14 33.500T63 88" stroke-width="2.500"/></svg></div><span class="mt-3 size-2 rounded-full bg-[#93b3bd]"></span></div>
  <!-- WhatsApp -->
  <div class="w-32 flex flex-col items-center pt-3"><div class="h-28 flex items-center"><svg class="rounded-[22px]" width="96" height="96" viewBox="0 0 96 96"><defs><linearGradient id="wa" x2="0" y2="1"><stop stop-color="#8be878"/><stop offset="1" stop-color="#55c23c"/></linearGradient></defs><rect width="96" height="96" fill="url(#wa)"/><path d="M14 82l4.500-16.500A34 34 0 1 1 31 78z" fill="none" stroke="#f6fbf4" stroke-width="6" stroke-linejoin="round"/><use href="#handset" x="26" y="25" width="44" height="44" fill="#f6fbf4"/></svg></div></div>
  <!-- VS Code -->
  <div class="w-32 flex flex-col items-center pt-3"><div class="h-28 flex items-center"><svg class="rounded-[22px]" width="96" height="96" viewBox="0 0 96 96"><rect width="96" height="96" fill="#fff"/><path d="M14 60l6 6L64 30V15L14 58z" fill="#2465a8"/><path d="M14 36l6-6 44 36v15z" fill="#2c7ccc"/><path d="M64 14l15 7q3 2 3 4v46q0 2-3 4l-15 7z" fill="#469ceb"/></svg></div><span class="mt-3 size-2 rounded-full bg-[#93b3bd]"></span></div>
  <!-- Terminal -->
  <div class="w-32 flex flex-col items-center pt-3"><div class="h-28 flex items-center"><svg class="rounded-[22px]" width="96" height="96" viewBox="0 0 96 96" fill="none"><defs><linearGradient id="te" x2="0" y2="1"><stop stop-color="#dcebf2"/><stop offset="1" stop-color="#7b7775"/></linearGradient></defs><rect width="96" height="96" fill="url(#te)"/><rect x="4" y="4" width="88" height="88" rx="18" fill="#050505"/><rect x="10" y="10" width="76" height="76" rx="12" fill="#262626"/><path d="M18 19l9 5-9 6M33 36.500h14" stroke="#f2f2f2" stroke-width="3.500"/></svg></div></div>
  <!-- Eclipse -->
  <div class="w-32 flex flex-col items-center pt-3"><div class="h-28 flex items-center"><svg width="122" height="110" viewBox="0 0 122 110"><path d="M58 1Q2 8 1 55t57 54Q20 98 20 55T58 1z" fill="#ea993f"/><ellipse cx="67" cy="55" rx="53" ry="52" fill="#2a2352" stroke="#0b0a14" stroke-width="2"/><path d="M32 62h70q-6 29-35 29T32 62z" fill="#40357c"/><path d="M15 43h104M14 55h106M15 67h104" stroke="#fff" stroke-width="6"/></svg></div></div>
  <!-- PyCharm -->
  <div class="w-32 flex flex-col items-center pt-3"><div class="relative h-28 flex items-center"><svg width="110" height="110" viewBox="0 0 110 110"><path d="M7 17L46 1l24 24-30 60-3 24L1 88z" fill="#5fd494"/><path d="M7 17L46 1 20 60 1 88z" fill="#8fe070"/><path d="M82 1l3 24-30 2z" fill="#9cec68"/><path d="M55 27L82 1l-12 24z" fill="#c4f068"/><path d="M86 26l22 17-16 36z" fill="#5cc8f4"/><path d="M37 109l10-22-12 4z" fill="#3fa0d8"/><path d="M94 47l15 52-34 10-43-14 12-24z" fill="#f4f45c"/><path d="M75 109l14-26 20 16z" fill="#c8f060"/><rect x="21" y="22" width="67" height="67" fill="#070a06"/><path d="M29 79h26" stroke="#fff" stroke-width="5"/></svg><span class="absolute left-[28px] top-[24px] text-white text-[34px] leading-[40px] font-bold tracking-[-0.5px]">PC</span></div></div>
  <span class="ml-[28px] mt-[18px] w-0.5 h-[110px] bg-[#4c7078]"></span>
  <!-- Trash -->
  <svg class="ml-[46px] mt-[14px]" width="86" height="110" viewBox="0 0 88 110" preserveAspectRatio="none"><defs><linearGradient id="tr"><stop stop-color="#6f777b"/><stop offset=".2" stop-color="#5c6468"/><stop offset=".8" stop-color="#5e6569"/><stop offset="1" stop-color="#848b8f"/></linearGradient></defs><path d="M1 12l10 80q2 15 33 15t33-15l10-80z" fill="url(#tr)"/><path d="M11 88q4 10 33 10t33-10v4q-2 15-33 15T11 92z" fill="#858a8e" opacity=".6"/><ellipse cx="44" cy="12" rx="43" ry="10" fill="#425d66" stroke="#7d878c" stroke-width="1.500"/></svg>
</div>
</body>
</html>
